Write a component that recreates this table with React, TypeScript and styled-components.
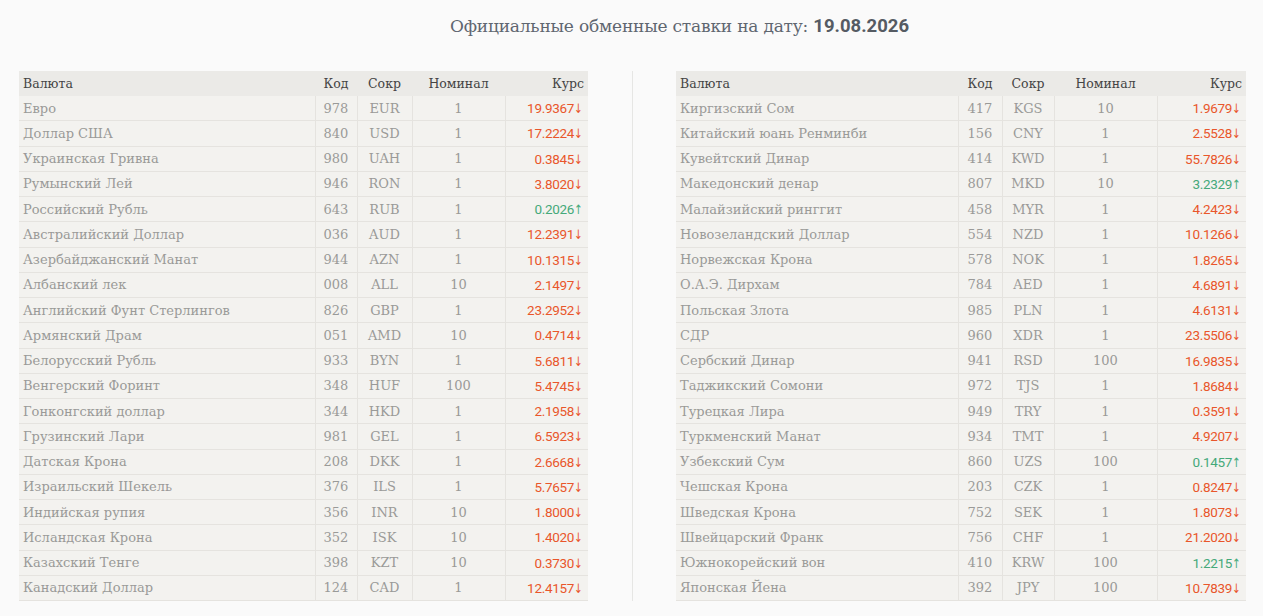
import React from "react";
import styled, { createGlobalStyle } from "styled-components";

const GlobalStyle = createGlobalStyle`
    html, body {
        margin: 0;
        padding: 0;
        background: #fafafa;
    }
    body {
        font-family: "DejaVu Serif", "Liberation Serif", serif;
    }
`;

type Rate = {
    name: string;
    code: string;
    short: string;
    nominal: number;
    rate: string;
    up?: boolean;
};

const leftRates: Rate[] = [
    { name: "Евро", code: "978", short: "EUR", nominal: 1, rate: "19.9367" },
    { name: "Доллар США", code: "840", short: "USD", nominal: 1, rate: "17.2224" },
    { name: "Украинская Гривна", code: "980", short: "UAH", nominal: 1, rate: "0.3845" },
    { name: "Румынский Лей", code: "946", short: "RON", nominal: 1, rate: "3.8020" },
    { name: "Российский Рубль", code: "643", short: "RUB", nominal: 1, rate: "0.2026", up: true },
    { name: "Австралийский Доллар", code: "036", short: "AUD", nominal: 1, rate: "12.2391" },
    { name: "Азербайджанский Манат", code: "944", short: "AZN", nominal: 1, rate: "10.1315" },
    { name: "Албанский лек", code: "008", short: "ALL", nominal: 10, rate: "2.1497" },
    { name: "Английский Фунт Стерлингов", code: "826", short: "GBP", nominal: 1, rate: "23.2952" },
    { name: "Армянский Драм", code: "051", short: "AMD", nominal: 10, rate: "0.4714" },
    { name: "Белорусский Рубль", code: "933", short: "BYN", nominal: 1, rate: "5.6811" },
    { name: "Венгерский Форинт", code: "348", short: "HUF", nominal: 100, rate: "5.4745" },
    { name: "Гонконгский доллар", code: "344", short: "HKD", nominal: 1, rate: "2.1958" },
    { name: "Грузинский Лари", code: "981", short: "GEL", nominal: 1, rate: "6.5923" },
    { name: "Датская Крона", code: "208", short: "DKK", nominal: 1, rate: "2.6668" },
    { name: "Израильский Шекель", code: "376", short: "ILS", nominal: 1, rate: "5.7657" },
    { name: "Индийская рупия", code: "356", short: "INR", nominal: 10, rate: "1.8000" },
    { name: "Исландская Крона", code: "352", short: "ISK", nominal: 10, rate: "1.4020" },
    { name: "Казахский Тенге", code: "398", short: "KZT", nominal: 10, rate: "0.3730" },
    { name: "Канадский Доллар", code: "124", short: "CAD", nominal: 1, rate: "12.4157" },
];

const rightRates: Rate[] = [
    { name: "Киргизский Сом", code: "417", short: "KGS", nominal: 10, rate: "1.9679" },
    { name: "Китайский юань Ренминби", code: "156", short: "CNY", nominal: 1, rate: "2.5528" },
    { name: "Кувейтский Динар", code: "414", short: "KWD", nominal: 1, rate: "55.7826" },
    { name: "Македонский денар", code: "807", short: "MKD", nominal: 10, rate: "3.2329", up: true },
    { name: "Малайзийский ринггит", code: "458", short: "MYR", nominal: 1, rate: "4.2423" },
    { name: "Новозеландский Доллар", code: "554", short: "NZD", nominal: 1, rate: "10.1266" },
    { name: "Норвежская Крона", code: "578", short: "NOK", nominal: 1, rate: "1.8265" },
    { name: "О.А.Э. Дирхам", code: "784", short: "AED", nominal: 1, rate: "4.6891" },
    { name: "Польская Злота", code: "985", short: "PLN", nominal: 1, rate: "4.6131" },
    { name: "СДР", code: "960", short: "XDR", nominal: 1, rate: "23.5506" },
    { name: "Сербский Динар", code: "941", short: "RSD", nominal: 100, rate: "16.9835" },
    { name: "Таджикский Сомони", code: "972", short: "TJS", nominal: 1, rate: "1.8684" },
    { name: "Турецкая Лира", code: "949", short: "TRY", nominal: 1, rate: "0.3591" },
    { name: "Туркменский Манат", code: "934", short: "TMT", nominal: 1, rate: "4.9207" },
    { name: "Узбекский Сум", code: "860", short: "UZS", nominal: 100, rate: "0.1457", up: true },
    { name: "Чешская Крона", code: "203", short: "CZK", nominal: 1, rate: "0.8247" },
    { name: "Шведская Крона", code: "752", short: "SEK", nominal: 1, rate: "1.8073" },
    { name: "Швейцарский Франк", code: "756", short: "CHF", nominal: 1, rate: "21.2020" },
    { name: "Южнокорейский вон", code: "410", short: "KRW", nominal: 100, rate: "1.2215", up: true },
    { name: "Японская Йена", code: "392", short: "JPY", nominal: 100, rate: "10.7839" },
];

const Page = styled.div`
    padding: 0 17px 0 19px;
`;

const Title = styled.h2`
    margin: 0;
    height: 52px;
    line-height: 52px;
    padding-left: 94px;
    text-align: center;
    font-family: "DejaVu Serif", serif;
    font-weight: normal;
    font-size: 17px;
    color: #5f6670;
    letter-spacing: -0.2px;
`;

const DateValue = styled.b`
    font-family: Roboto, "Liberation Sans", sans-serif;
    font-weight: 700;
    font-size: 18.5px;
    color: #555b63;
    letter-spacing: 0;
`;

const Columns = styled.div`
    display: grid;
    grid-template-columns: 1fr 1fr;
    margin-top: 19px;
`;

const Half = styled.div<{ $right?: boolean }>`
    padding: 0 ${(p) => (p.$right ? "0" : "44px")} 0 ${(p) => (p.$right ? "43px" : "0")};
    border-left: ${(p) => (p.$right ? "1px solid #e6e6e4" : "none")};
`;

const Table = styled.table`
    width: 100%;
    border-collapse: collapse;
    table-layout: fixed;
    font-size: 13px;
`;

const HeadCell = styled.th<{ $align: string }>`
    height: 25px;
    padding: 0 4px;
    background: #ebeae7;
    color: #444;
    font-weight: normal;
    font-size: 12.5px;
    text-align: ${(p) => p.$align};
    white-space: nowrap;
`;

const Row = styled.tr`
    background: #f3f2ef;
    border-bottom: 1px solid #e5e3df;
`;

const Cell = styled.td<{ $align: string }>`
    height: 23.25px;
    padding: 1px 4px 0;
    line-height: 16px;
    color: #9a9a98;
    text-align: ${(p) => p.$align};
    white-space: nowrap;
    & + & {
        border-left: 1px solid #e5e3df;
    }
`;

const RateValue = styled.span<{ $up?: boolean }>`
    font-family: Roboto, "Liberation Sans", sans-serif;
    font-size: 13.5px;
    line-height: 16px;
    letter-spacing: -0.3px;
    color: ${(p) => (p.$up ? "#45a97a" : "#e9562b")};
`;

const Arrow = styled.span`
    font-family: "DejaVu Sans", sans-serif;
    font-size: 13px;
    line-height: 16px;
    letter-spacing: 0;
    display: inline-block;
    transform: scaleX(0.8);
    margin-left: -1px;
`;

const aligns = ["left", "center", "center", "center", "right"];

type TableProps = {
    rates: Rate[];
    widths: number[];
};

const RatesTable = (props: TableProps) => (
    <Table>
        <colgroup>
            {props.widths.map((w, i) => (
                <col key={i} style={{ width: w }} />
            ))}
        </colgroup>
        <thead>
            <tr>
                {["Валюта", "Код", "Сокр", "Номинал", "Курс"].map((h, i) => (
                    <HeadCell key={h} $align={aligns[i]}>
                        {h}
                    </HeadCell>
                ))}
            </tr>
        </thead>
        <tbody>
            {props.rates.map((r) => (
                <Row key={r.short}>
                    <Cell $align="left">{r.name}</Cell>
                    <Cell $align="center">{r.code}</Cell>
                    <Cell $align="center">{r.short}</Cell>
                    <Cell $align="center">{r.nominal}</Cell>
                    <Cell $align="right">
                        <RateValue $up={r.up}>
                            {r.rate}
                            <Arrow>{r.up ? "↑" : "↓"}</Arrow>
                        </RateValue>
                    </Cell>
                </Row>
            ))}
        </tbody>
    </Table>
);

export default function App() {
    return (
        <Page>
            <GlobalStyle />
            <Title>
                Официальные обменные ставки на дату: <DateValue>19.08.2026</DateValue>
            </Title>
            <Columns>
                <Half>
                    <RatesTable rates={leftRates} widths={[296, 42, 55, 93, 83]} />
                </Half>
                <Half $right>
                    <RatesTable rates={rightRates} widths={[282, 44, 52, 103, 89]} />
                </Half>
            </Columns>
        </Page>
    );
}
